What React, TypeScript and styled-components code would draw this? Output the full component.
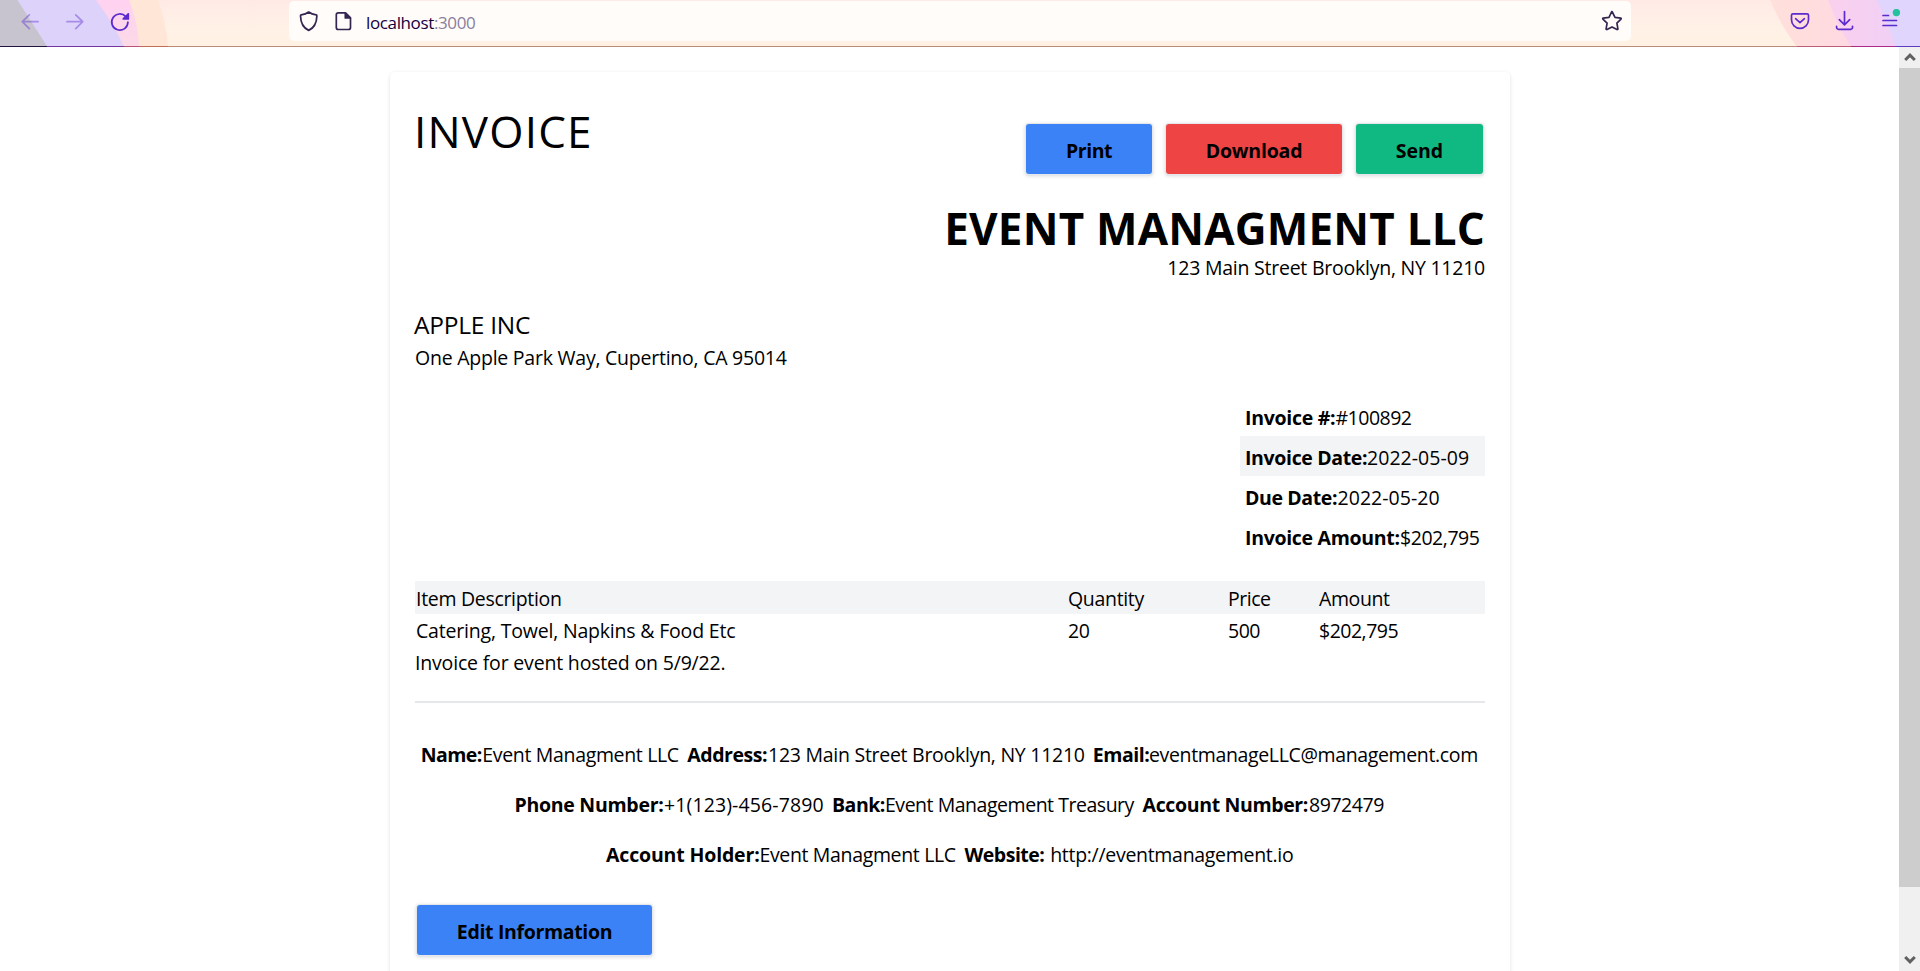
import React from "react";
import styled, { createGlobalStyle } from "styled-components";

const GlobalStyle = createGlobalStyle`
  *, *::before, *::after { box-sizing: border-box; }
  html, body { margin: 0; padding: 0; background: #fff; overflow: hidden; }
  body { font-family: "Open Sans", "Noto Sans", sans-serif; font-size: 19.5px; color: #000; }
  p, h1, h2, h3 { margin: 0; font-weight: 400; }
`;

/* ---------- Window ---------- */

const Window = styled.div`
  display: flex;
  flex-direction: column;
  width: 1920px;
  height: 971px;
  overflow: hidden;
`;

const Toolbar = styled.header`
  position: relative;
  z-index: 0;
  display: flex;
  align-items: flex-start;
  height: 47px;
  flex: none;
`;

const ToolbarArt = styled.svg`
  position: absolute;
  inset: 0;
  z-index: -1;
`;

const NavGroup = styled.div`
  display: flex;
  width: 289px;
  padding: 10px 0 0 18px;
  gap: 21px;
`;

const AddressBar = styled.div`
  display: flex;
  width: 1342px;
  height: 40px;
  margin-top: 1px;
  padding: 8px 7px 0 8px;
  border-radius: 5px;
  background: #fffcfa;
`;

const AddressIcons = styled.div`
  display: flex;
  gap: 11px;
  width: 69px;
`;

const Address = styled.div`
  flex: 1;
  padding-top: 1px;
  font-size: 17px;
  line-height: 25px;
  letter-spacing: -0.37px;
  color: #15003f;
`;

const Port = styled.span`
  color: #8a7f9c;
`;

const ActionGroup = styled.div`
  display: flex;
  flex: 1;
  padding: 9px 0 0 157px;
  gap: 21px;
`;

const Icon = styled.svg<{ $color?: string; $opacity?: number }>`
  display: block;
  flex: none;
  width: 24px;
  height: 24px;
  fill: none;
  stroke: ${(p) => p.$color ?? "#5b2bd0"};
  stroke-width: 1.7;
  stroke-linecap: round;
  stroke-linejoin: round;
  opacity: ${(p) => p.$opacity ?? 1};
`;

const Body = styled.div`
  display: flex;
  flex: 1;
  min-height: 0;
`;

const Viewport = styled.main`
  width: 1899px;
  padding: 25px 0 0 390px;
  overflow: hidden;
`;

const Scrollbar = styled.aside`
  display: flex;
  flex-direction: column;
  width: 21px;
  background: #f0f0f0;
`;

const ScrollButton = styled.div`
  display: flex;
  align-items: center;
  justify-content: center;
  height: 21px;
  padding-bottom: 1px;
`;

const Thumb = styled.div`
  height: 819px;
  background: #cdcdcd;
`;

const ScrollSpace = styled.div`
  flex: 1;
`;

const Chevron = styled.svg`
  width: 12px;
  height: 10px;
  fill: none;
  stroke: #606060;
  stroke-width: 3;
`;

/* ---------- Invoice ---------- */

const Card = styled.article`
  width: 1120px;
  height: 1100px;
  padding: 25px;
  border-radius: 5px;
  background: #fff;
  box-shadow: 0 1px 4px rgba(0, 0, 0, 0.1), 0 1px 2px rgba(0, 0, 0, 0.06);
`;

const Text = styled.span<{ $track?: number; $w?: number; $bold?: boolean }>`
  display: inline-block;
  flex: none;
  white-space: pre;
  letter-spacing: ${(p) => p.$track ?? 0}px;
  width: ${(p) => (p.$w ? `${p.$w}px` : "auto")};
  font-weight: ${(p) => (p.$bold ? 700 : 400)};
`;

const Header = styled.header`
  display: flex;
  justify-content: space-between;
  height: 106px;
`;

const Title = styled.h1`
  padding-top: 9px;
  font-size: 44px;
  line-height: 50px;
  letter-spacing: 1.2px;
  text-indent: -1px;
`;

const Actions = styled.div`
  display: flex;
  gap: 14px;
  padding: 27px 2px 0 0;
`;

const Button = styled.button<{ $bg: string; $w: number; $track: number }>`
  display: block;
  width: ${(p) => p.$w}px;
  height: 50px;
  padding: 0;
  border: 0;
  border-radius: 3px;
  background: ${(p) => p.$bg};
  box-shadow: 0 0 0 1px #e5e7eb, 0 1px 1px 1px #e5e7eb, 0 1px 4px 1px rgba(0, 0, 0, 0.14);
  color: #000;
  font-family: inherit;
  font-size: 19.5px;
  font-weight: 700;
  line-height: 53px;
  letter-spacing: ${(p) => p.$track}px;
  text-align: center;
`;

const Company = styled.section`
  height: 104px;
  text-align: right;
`;

const CompanyName = styled.h2`
  font-size: 44px;
  font-weight: 700;
  line-height: 50px;
  letter-spacing: 0.2px;
`;

const Line = styled.p`
  height: 31px;
  line-height: 31px;
`;

const CompanyLine = styled(Line)`
  height: 29px;
  line-height: 29px;
`;

const Client = styled.section`
  height: 89px;
`;

const ClientName = styled.h2`
  font-size: 24.5px;
  line-height: 35px;
  text-indent: -0.5px;
`;

const Meta = styled.ul`
  width: 245px;
  margin: 0 0 25px auto;
  padding: 0;
  list-style: none;
`;

const MetaRow = styled.li<{ $shaded?: boolean }>`
  display: flex;
  height: 40px;
  padding-left: 5px;
  line-height: 43px;
  background: ${(p) => (p.$shaded ? "#f3f4f6" : "transparent")};
`;

const ItemRow = styled.div<{ $head?: boolean }>`
  display: grid;
  grid-template-columns: 652px 160px 91px auto;
  height: ${(p) => (p.$head ? 33 : 32)}px;
  padding-left: 1px;
  line-height: ${(p) => (p.$head ? 35 : 33)}px;
  background: ${(p) => (p.$head ? "#f3f4f6" : "transparent")};
`;

const Notes = styled.p`
  height: 55px;
  line-height: 33px;
`;

const Rule = styled.hr`
  height: 2px;
  margin: 0 0 27px;
  border: 0;
  background: #e5e7eb;
`;

const Payee = styled.footer`
  height: 175px;
`;

const PayeeRow = styled.div`
  display: flex;
  justify-content: center;
  height: 50px;
  line-height: 49px;
`;

const EditArea = styled.div`
  padding-left: 2px;
`;

type Run = { text: string; w: number; track: number; bold?: boolean };

const meta: { label: string; labelW: number; labelTrack: number; value: string; track: number }[] = [
  { label: "Invoice #:", labelW: 90.5, labelTrack: -0.29, value: "#100892", track: -0.5 },
  { label: "Invoice Date:", labelW: 122, labelTrack: -0.35, value: "2022-05-09", track: 0.05 },
  { label: "Due Date:", labelW: 92.5, labelTrack: -0.38, value: "2022-05-20", track: 0.05 },
  { label: "Invoice Amount:", labelW: 155, labelTrack: -0.31, value: "$202,795", track: -0.45 },
];

const payee: Run[][] = [
  [
    { text: "Name:", w: 61.6, track: -0.6, bold: true },
    { text: "Event Managment LLC", w: 205, track: -0.34 },
    { text: "Address:", w: 80.7, track: -0.47, bold: true },
    { text: "123 Main Street Brooklyn, NY 11210", w: 324.8, track: -0.27 },
    { text: "Email:", w: 56.2, track: -0.45, bold: true },
    { text: "eventmanageLLC@management.com", w: 330.2, track: -0.36 },
  ],
  [
    { text: "Phone Number:", w: 149.5, track: -0.28, bold: true },
    { text: "+1(123)-456-7890", w: 168, track: 0.12 },
    { text: "Bank:", w: 53, track: -0.5, bold: true },
    { text: "Event Management Treasury", w: 257.6, track: -0.47 },
    { text: "Account Number:", w: 166.4, track: -0.36, bold: true },
    { text: "8972479", w: 76.5, track: -0.45 },
  ],
  [
    { text: "Account Holder:", w: 153.4, track: -0.16, bold: true },
    { text: "Event Managment LLC", w: 205, track: -0.34 },
    { text: "Website:", w: 85.8, track: -0.48, bold: true },
    { text: "http://eventmanagement.io", w: 243.8, track: -0.3 },
  ],
];

function BrowserArt() {
  return (
    <ToolbarArt width="1920" height="47" viewBox="0 0 1920 47">
      <defs>
        <linearGradient id="base" x1="0" y1="0" x2="0" y2="1">
          <stop offset="0" stopColor="#ffeae6" />
          <stop offset="0.6" stopColor="#fff1e6" />
          <stop offset="1" stopColor="#fff1e2" />
        </linearGradient>
        <linearGradient id="pink" x1="0" y1="0" x2="0" y2="1">
          <stop offset="0" stopColor="#ffd2f1" />
          <stop offset="1" stopColor="#fbd9e6" />
        </linearGradient>
        <linearGradient id="rose" x1="0" y1="0" x2="1" y2="0">
          <stop offset="0" stopColor="#ffe0da" />
          <stop offset="1" stopColor="#ffd3e8" />
        </linearGradient>
        <linearGradient id="orchid" x1="0" y1="0" x2="1" y2="0">
          <stop offset="0" stopColor="#fbd0ee" />
          <stop offset="1" stopColor="#ecd0f8" />
        </linearGradient>
      </defs>
      <rect width="1920" height="47" fill="url(#base)" />
      <path d="M0 0H158Q166 22 168 47H0Z" fill="#ffe6d6" />
      <path d="M0 0H129Q138 22 139 47H0Z" fill="url(#pink)" />
      <path d="M0 0H96Q116 27 124 47H0Z" fill="#ddd3fa" />
      <path d="M0 0H17.5L47.5 47H0Z" fill="#c8c4cf" />
      <path d="M1770 0Q1781 26 1797 47H1920V0Z" fill="url(#rose)" />
      <path d="M1828 0Q1837 25 1851 47H1920V0Z" fill="url(#orchid)" />
      <path d="M1877 0Q1889 25 1896 47H1920V0Z" fill="#dfd5fd" />
      <path d="M168 46.5H1797" stroke="#b98b78" />
      <path d="M0 46.5H47" stroke="#23133a" />
      <path d="M47 46.5H124" stroke="#75369f" />
      <path d="M124 46.5H139" stroke="#b9537c" />
      <path d="M139 46.5H168" stroke="#bf6d55" />
      <path d="M1797 46.5H1851" stroke="#bf5d78" />
      <path d="M1851 46.5H1896" stroke="#aa2c88" />
      <path d="M1896 46.5H1920" stroke="#5c3bc0" />
    </ToolbarArt>
  );
}

export default function App() {
  return (
    <>
      <GlobalStyle />
      <Window>
        <Toolbar>
          <BrowserArt />
          <NavGroup>
            <Icon $opacity={0.42} viewBox="0 0 24 24">
              <path d="M20 11.7H4.5M11.3 4.8 4.3 11.7l7 6.9" />
            </Icon>
            <Icon $opacity={0.42} viewBox="0 0 24 24">
              <path d="M4 11.7h15.5M12.7 4.8l7 6.9-7 6.9" />
            </Icon>
            <Icon viewBox="0 0 24 24">
              <path d="M19.9 12.2A8.1 8.1 0 1 1 17.8 6.6" />
              <path d="M20.3 3.9v5h-5z" fill="#5b2bd0" />
            </Icon>
          </NavGroup>
          <AddressBar>
            <AddressIcons>
              <Icon $color="#352650" viewBox="0 0 24 24">
                <path d="M11.7 3C9.6 4.6 7 5.5 4.2 5.9c-.5.1-.7.5-.7 1C3.7 13.6 5.9 18.800 11.7 21.4 17.5 18.8 19.7 13.6 19.9 6.9c0-.5-.2-.9-.7-1C16.4 5.5 13.800 4.6 11.7 3Z" />
              </Icon>
              <Icon $color="#352650" viewBox="0 0 24 24">
                <path d="M6.3 3.8h7.2l5 5v9.7a2 2 0 0 1-2 2H6.3a2 2 0 0 1-2-2V5.8a2 2 0 0 1 2-2Z" />
                <path d="M13.3 4v5h5z" fill="#352650" />
              </Icon>
            </AddressIcons>
            <Address>
              localhost<Port>:3000</Port>
            </Address>
            <Icon $color="#352650" viewBox="0 0 24 24">
              <path d="M14.3 3.6 17 8.9l5.7.8c.5.1.7.7.3 1l-4.1 4 1 5.7c.1.5-.4.9-.9.7L14 18.500l-5 2.6c-.5.2-1-.2-.9-.7l1-5.7-4.2-4c-.4-.3-.2-.9.3-1l5.8-.8 2.5-5.3c.2-.4.6-.4.8 0Z" transform="translate(-2 -0.6)" />
            </Icon>
          </AddressBar>
          <ActionGroup>
            <Icon viewBox="0 0 24 24">
              <path d="M5 4.8h14a1.500 1.500 0 0 1 1.5 1.5v4.5a8.500 8.500 0 0 1-17 0V6.3A1.500 1.500 0 0 1 5 4.8Z" />
              <path d="m7.6 9.7 4.4 4 4.4-4" />
            </Icon>
            <Icon viewBox="0 0 24 24">
              <path d="M11.5 2.5v13M6.3 10.6l5.2 5.2 5.2-5.2M3.6 17.3v1.2a1.8 1.8 0 0 0 1.8 1.8h12.3a1.8 1.8 0 0 0 1.8-1.8v-1.2" />
            </Icon>
            <Icon viewBox="0 0 24 24">
              <path d="M5 6.500h5.500M5 11.500h13.500M5 16.500h13.500" />
              <circle cx="18.4" cy="3.6" r="3.7" fill="#23c29c" stroke="none" />
            </Icon>
          </ActionGroup>
        </Toolbar>

        <Body>
          <Viewport>
            <Card>
              <Header>
                <Title>INVOICE</Title>
                <Actions>
                  <Button $bg="#3b82f6" $w={126} $track={-0.47}>Print</Button>
                  <Button $bg="#ef4444" $w={176} $track={-0.19}>Download</Button>
                  <Button $bg="#10b981" $w={127} $track={-0.03}>Send</Button>
                </Actions>
              </Header>

              <Company>
                <CompanyName>EVENT MANAGMENT LLC</CompanyName>
                <CompanyLine>
                  <Text $track={-0.24}>123 Main Street Brooklyn, NY 11210</Text>
                </CompanyLine>
              </Company>

              <Client>
                <ClientName>
                  <Text $track={-0.25}>APPLE INC</Text>
                </ClientName>
                <Line>
                  <Text $track={-0.24}>One Apple Park Way, Cupertino, CA 95014</Text>
                </Line>
              </Client>

              <Meta>
                {meta.map((m, i) => (
                  <MetaRow key={m.label} $shaded={i === 1}>
                    <Text $bold $w={m.labelW} $track={m.labelTrack}>{m.label}</Text>
                    <Text $track={m.track}>{m.value}</Text>
                  </MetaRow>
                ))}
              </Meta>

              <ItemRow $head>
                <Text $track={-0.31}>Item Description</Text>
                <Text $track={-0.32}>Quantity</Text>
                <Text $track={-0.49}>Price</Text>
                <Text $track={-0.4}>Amount</Text>
              </ItemRow>
              <ItemRow>
                <Text $track={-0.19}>Catering, Towel, Napkins &amp; Food Etc</Text>
                <Text $track={-0.4}>20</Text>
                <Text $track={-0.5}>500</Text>
                <Text $track={-0.5}>$202,795</Text>
              </ItemRow>
              <Notes>
                <Text $track={-0.18}>Invoice for event hosted on 5/9/22.</Text>
              </Notes>
              <Rule />

              <Payee>
                {payee.map((row, i) => (
                  <PayeeRow key={i}>
                    {row.map((r) => (
                      <Text key={r.text} $w={r.w} $track={r.track} $bold={r.bold}>{r.text}</Text>
                    ))}
                  </PayeeRow>
                ))}
              </Payee>

              <EditArea>
                <Button $bg="#3b82f6" $w={235} $track={-0.34}>Edit Information</Button>
              </EditArea>
            </Card>
          </Viewport>

          <Scrollbar>
            <ScrollButton>
              <Chevron viewBox="0 0 12 10"><path d="M1.200 8 6 3.200 10.800 8" /></Chevron>
            </ScrollButton>
            <Thumb />
            <ScrollSpace />
            <ScrollButton>
              <Chevron viewBox="0 0 12 10"><path d="M1.200 2 6 6.800 10.800 2" /></Chevron>
            </ScrollButton>
          </Scrollbar>
        </Body>
      </Window>
    </>
  );
}
